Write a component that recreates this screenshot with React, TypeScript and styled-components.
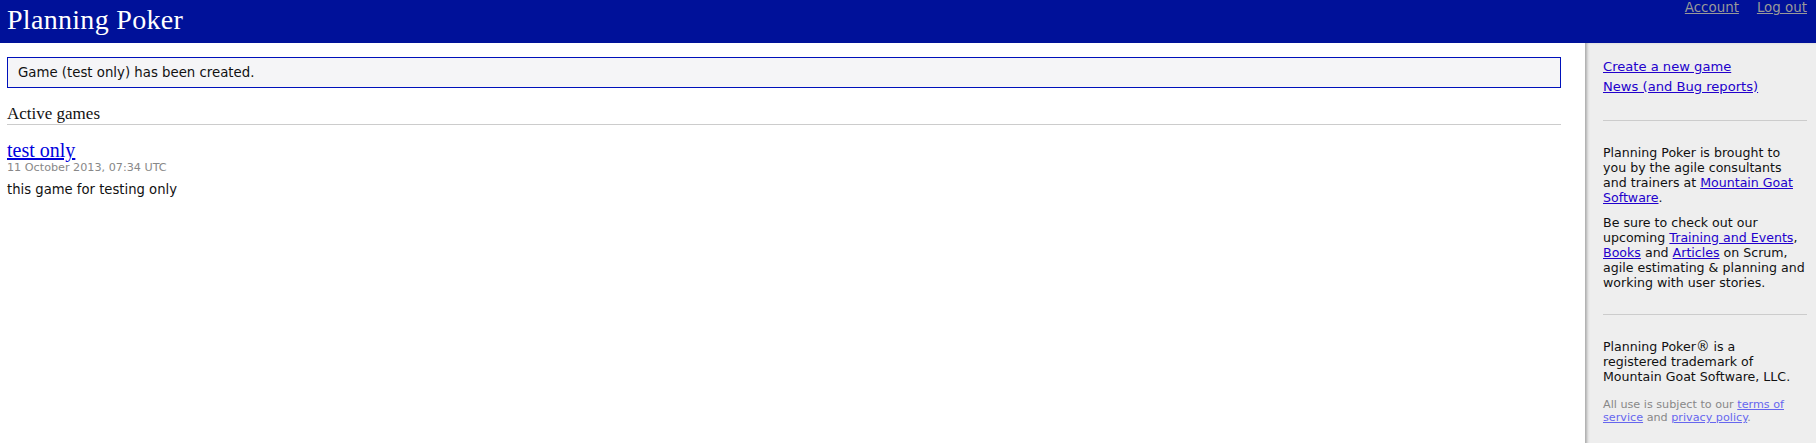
import React, { FC, ReactElement } from 'react';
import styled, { createGlobalStyle } from 'styled-components';

const GlobalStyle = createGlobalStyle`
  html, body {
    margin: 0;
    padding: 0;
    height: 100%;
  }
  body {
    font-family: "DejaVu Sans", Verdana, sans-serif;
    font-size: 13.2px;
    color: #111;
    background: #fff;
  }
  #root {
    min-height: 100%;
    display: flex;
    flex-direction: column;
  }
`;

const Page = styled.div`
  flex: 1;
  display: flex;
  flex-direction: column;
  min-height: 100vh;
`;

const Header = styled.header`
  height: 43px;
  flex-shrink: 0;
  background: #001199;
  display: flex;
  justify-content: space-between;
  align-items: flex-start;
  padding: 0 9px 0 7px;
`;

const Title = styled.h1`
  margin: 0;
  font-family: "Liberation Serif", "Times New Roman", serif;
  font-weight: normal;
  font-size: 28px;
  line-height: 39px;
  letter-spacing: 0.3px;
  color: #fff;
`;

const UserNav = styled.nav`
  display: flex;
  gap: 18px;
  font-size: 13.4px;
  line-height: 16px;
`;

const NavLink = styled.a`
  color: #999;
  text-decoration: underline;
`;

const Body = styled.div`
  flex: 1;
  display: flex;
`;

const Main = styled.main`
  flex: 1;
  padding: 14px 24px 0 7px;
  display: flex;
  flex-direction: column;
`;

const Flash = styled.div`
  border: 1px solid #0011bb;
  background: #f5f5f7;
  padding: 7px 10px;
  font-size: 13.3px;
  line-height: 15px;
`;

const SectionTitle = styled.h2`
  margin: 16px 0 0;
  font-family: "Liberation Serif", "Times New Roman", serif;
  font-weight: normal;
  font-size: 17px;
  line-height: 19px;
  padding-bottom: 1px;
  border-bottom: 1px solid #ccc;
  color: #111;
`;

const Game = styled.div`
  margin-top: 14px;
  display: flex;
  flex-direction: column;
`;

const GameLink = styled.a`
  font-family: "Liberation Serif", "Times New Roman", serif;
  font-size: 20px;
  line-height: 22px;
  color: #0000dd;
  align-self: flex-start;
`;

const GameDate = styled.div`
  font-size: 11.2px;
  line-height: 14px;
  color: #888;
`;

const GameDescription = styled.p`
  margin: 7px 0 0;
  line-height: 16px;
`;

const Sidebar = styled.aside`
  width: 204px;
  flex-shrink: 0;
  background: #eee;
  box-shadow: inset 3px 0 3px -1px #aaa;
  padding: 14px 9px 0 18px;
`;

const SideSection = styled.section<{ $divided?: boolean }>`
  padding: ${(p) => (p.$divided ? '24px 0 24px' : '0 0 23px')};
  border-top: ${(p) => (p.$divided ? '1px solid #ccc' : 'none')};
`;

const SideLink = styled.a`
  display: block;
  font-size: 13.1px;
  line-height: 20px;
  color: #2200cc;
`;

// lines are broken by hand, the substitute font does not wrap like the original
const SideText = styled.p`
  margin: 0;
  font-size: 12.6px;
  line-height: 15px;
  white-space: nowrap;
  & + & {
    margin-top: 10px;
  }
`;

const Mark = styled.span`
  font-size: 13.6px;
  line-height: 1;
`;

const TextLink = styled.a`
  color: #2200cc;
`;

const FinePrint = styled.p`
  margin: 14px 0 0;
  font-size: 11.2px;
  line-height: 13px;
  color: #888;
`;

const FineLink = styled.a`
  color: #6666ee;
`;

const App: FC = (): ReactElement => (
  <>
    <GlobalStyle />
    <Page>
      <Header>
        <Title>Planning Poker</Title>
        <UserNav>
          <NavLink href="#">Account</NavLink>
          <NavLink href="#">Log out</NavLink>
        </UserNav>
      </Header>
      <Body>
        <Main>
          <Flash>Game (test only) has been created.</Flash>
          <SectionTitle>Active games</SectionTitle>
          <Game>
            <GameLink href="#">test only</GameLink>
            <GameDate>11 October 2013, 07:34 UTC</GameDate>
            <GameDescription>this game for testing only</GameDescription>
          </Game>
        </Main>
        <Sidebar>
          <SideSection>
            <SideLink href="#">Create a new game</SideLink>
            <SideLink href="#">News (and Bug reports)</SideLink>
          </SideSection>
          <SideSection $divided>
            <SideText>
              Planning Poker is brought to
              <br />
              you by the agile consultants
              <br />
              and trainers at <TextLink href="#">Mountain Goat</TextLink>
              <br />
              <TextLink href="#">Software</TextLink>.
            </SideText>
            <SideText>
              Be sure to check out our
              <br />
              upcoming <TextLink href="#">Training and Events</TextLink>,
              <br />
              <TextLink href="#">Books</TextLink> and <TextLink href="#">Articles</TextLink> on Scrum,
              <br />
              agile estimating &amp; planning and
              <br />
              working with user stories.
            </SideText>
          </SideSection>
          <SideSection $divided>
            <SideText>
              Planning Poker<Mark>®</Mark> is a
              <br />
              registered trademark of
              <br />
              Mountain Goat Software, LLC.
            </SideText>
            <FinePrint>
              All use is subject to our <FineLink href="#">terms of service</FineLink> and{' '}
              <FineLink href="#">privacy policy</FineLink>.
            </FinePrint>
          </SideSection>
        </Sidebar>
      </Body>
    </Page>
  </>
);

export default App;
